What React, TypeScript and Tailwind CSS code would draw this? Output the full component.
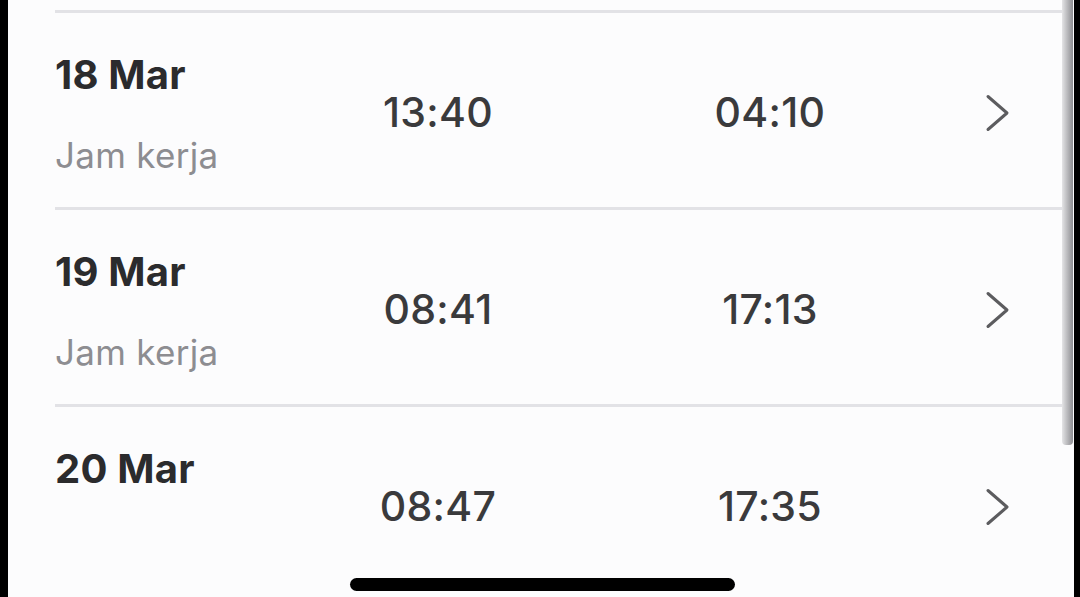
import { ReactNode } from "react";

type Entry = { date: string; note?: string; in: string; out: string };

const entries: Entry[] = [
  { date: "18 Mar", note: "Jam kerja", in: "13:40", out: "04:10" },
  { date: "19 Mar", note: "Jam kerja", in: "08:41", out: "17:13" },
  { date: "20 Mar", in: "08:47", out: "17:35" },
];

function Divider() {
  return <div className="ml-[47px] h-[3px] shrink-0 bg-[#e2e2e6]" />;
}

function Chevron() {
  return (
    <svg width="28" height="40" viewBox="0 0 28 40" fill="none">
      <path d="M4 3.5 L23 20 L4 36.5" stroke="#5c5c5f" strokeWidth="3" strokeLinecap="round" strokeLinejoin="round" />
    </svg>
  );
}

function Row({ entry }: { entry: Entry }) {
  return (
    <div className="flex h-[194px] shrink-0 items-start pl-[47px]">
      <div className="flex w-[283px] flex-col pt-[40px]">
        <span className="text-[40px] leading-[44px] font-bold tracking-[0.2px] text-[#2b2b2d]">{entry.date}</span>
        {entry.note && (
          <span className="mt-[38px] text-[35px] leading-[40px] tracking-[0.3px] text-[#8d8d91]">{entry.note}</span>
        )}
      </div>
      <Time>{entry.in}</Time>
      <div className="w-[132px]" />
      <Time>{entry.out}</Time>
      <div className="ml-[114px] flex h-full items-center pt-[5px]">
        <Chevron />
      </div>
    </div>
  );
}

function Time({ children }: { children: ReactNode }) {
  return (
    <div className="flex h-full w-[200px] items-center justify-center pt-[4px]">
      <span className="text-[41px] leading-[44px] font-medium tracking-[0.3px] text-[#3a3a3c]">{children}</span>
    </div>
  );
}

export default function App() {
  return (
    <div
      className="relative flex h-[597px] w-[1080px] overflow-hidden bg-[#fcfcfd]"
      style={{ fontFamily: "Inter, 'Liberation Sans', sans-serif" }}
    >
      <div className="w-[8px] shrink-0 bg-black" />
      <div className="flex w-[1054px] shrink-0 flex-col">
        <div className="h-[10px] shrink-0" />
        <Divider />
        <Row entry={entries[0]} />
        <Divider />
        <Row entry={entries[1]} />
        <Divider />
        <Row entry={entries[2]} />
      </div>
      <div className="w-[12px] shrink-0">
        <div className="h-[445px] w-[11px] rounded-b-[4px] bg-gradient-to-r from-[#e4e4e6] to-[#8e8e92]" />
      </div>
      <div className="w-[6px] shrink-0 bg-black" />
      <div className="absolute left-[350px] top-[578px] h-[13px] w-[385px] rounded-full bg-black" />
    </div>
  );
}
